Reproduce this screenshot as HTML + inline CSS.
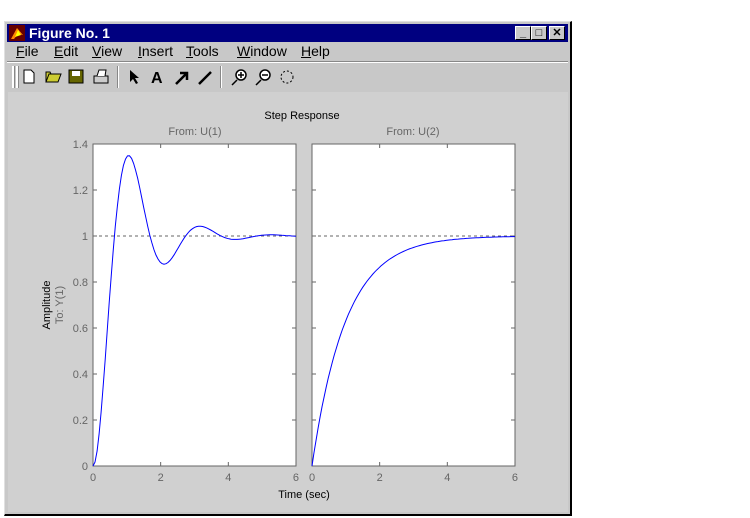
<!DOCTYPE html>
<html><head><style>
body{margin:0;width:750px;height:518px;background:#fff;position:relative;overflow:hidden;font-family:"Liberation Sans",sans-serif}
.win{position:absolute;left:4px;top:21px;width:568px;height:495px;background:#c8c8c8;border-top:1px solid #e0e0e0;border-left:1px solid #e0e0e0;border-right:2px solid #000;border-bottom:2px solid #000;box-sizing:border-box}
.title{position:absolute;left:7px;top:24px;width:561px;height:18px;background:#000080;color:#fff;font-weight:bold;font-size:14px;line-height:18px}
.title span{position:absolute;left:22px;top:0}
.btn{position:absolute;top:2px;width:16px;height:14px;background:#c8c8c8;border-top:1px solid #fff;border-left:1px solid #fff;border-right:1px solid #000;border-bottom:1px solid #000;box-sizing:border-box;color:#000;font-size:11px;line-height:12px;text-align:center}
.menu{position:absolute;top:43px;font-size:14px;color:#000}
.menu u{text-decoration:underline}
.fig{position:absolute;left:8px;top:92px;width:560px;height:420px;background:#d0d0d0}
</style></head><body>
<div class="win"></div>
<div class="title"><svg style="position:absolute;left:2px;top:1px" width="16" height="16"><rect width="16" height="16" fill="#600"/><path d="M2 14 L8 3 L14 10 L9 9 L5 14Z" fill="#f80"/><path d="M6 12 L9 5 L12 10Z" fill="#ff0"/></svg><span>Figure No. 1</span>
<div class="btn" style="left:508px">_</div><div class="btn" style="left:524px">□</div><div class="btn" style="left:542px;font-weight:bold">✕</div></div>
<div class="menu" style="left:16px"><u>F</u>ile</div>
<div class="menu" style="left:54px"><u>E</u>dit</div>
<div class="menu" style="left:92px"><u>V</u>iew</div>
<div class="menu" style="left:138px"><u>I</u>nsert</div>
<div class="menu" style="left:186px"><u>T</u>ools</div>
<div class="menu" style="left:237px"><u>W</u>indow</div>
<div class="menu" style="left:301px"><u>H</u>elp</div>
<div style="position:absolute;left:7px;top:61px;width:561px;height:1px;background:#888"></div>
<div style="position:absolute;left:7px;top:62px;width:561px;height:1px;background:#fff"></div>
<svg style="position:absolute;left:0;top:62px" width="320" height="30">
<rect x="12" y="4" width="2" height="22" fill="#fff"/><rect x="14" y="4" width="1" height="22" fill="#888"/>
<rect x="16" y="4" width="2" height="22" fill="#fff"/><rect x="18" y="4" width="1" height="22" fill="#888"/>
<path d="M24 8h7l3 3v10h-10z" fill="#fff" stroke="#000"/>
<path d="M46 20 l3-8 h12 l-3 8z M46 20 v-10 h4 l1 2" fill="#cc3" stroke="#000"/>
<rect x="69" y="8" width="14" height="13" fill="#660" stroke="#000"/><rect x="72" y="9" width="8" height="5" fill="#fff"/>
<path d="M94 14h14v7h-14z" fill="#ccc" stroke="#000"/><path d="M97 14l2-6h7l-1 6" fill="#fff" stroke="#000"/>
<rect x="117" y="4" width="1" height="22" fill="#888"/><rect x="118" y="4" width="1" height="22" fill="#fff"/>
<path d="M130 8 l0 12 l3-3 l3 5 l2-1 l-3-5 h4z" fill="#000"/>
<text x="151" y="21" font-size="16" font-family="Liberation Sans" font-weight="bold">A</text>
<path d="M176 22 L186 12 M180 11h7v7" stroke="#000" stroke-width="2.5" fill="none"/>
<path d="M199 22 L211 10" stroke="#000" stroke-width="2.5"/>
<rect x="220" y="4" width="1" height="22" fill="#888"/><rect x="221" y="4" width="1" height="22" fill="#fff"/>
<circle cx="241" cy="13" r="5" fill="#fff" stroke="#000" stroke-width="1.5"/><path d="M237 18l-5 5M238 13h6M241 10v6" stroke="#000" stroke-width="1.5"/>
<circle cx="265" cy="13" r="5" fill="#fff" stroke="#000" stroke-width="1.5"/><path d="M261 18l-5 5M262 13h6" stroke="#000" stroke-width="1.5"/>
<circle cx="287" cy="15" r="6" fill="none" stroke="#000" stroke-dasharray="2 2"/>
</svg>
<div class="fig"></div>
<svg id="plot" style="position:absolute;left:0;top:0" width="750" height="518" font-family="Liberation Sans" font-size="11">
<rect x="93" y="144" width="203" height="322" fill="#fff" stroke="#666"/>
<rect x="312" y="144" width="203" height="322" fill="#fff" stroke="#666"/>
<text x="302" y="119" text-anchor="middle" fill="#000">Step Response</text>
<text x="195" y="135" text-anchor="middle" fill="#666">From: U(1)</text>
<text x="413" y="135" text-anchor="middle" fill="#666">From: U(2)</text>
<text x="304" y="498" text-anchor="middle" fill="#000">Time (sec)</text>
<text transform="translate(50,305) rotate(-90)" text-anchor="middle" fill="#000">Amplitude</text>
<text transform="translate(63,305) rotate(-90)" text-anchor="middle" fill="#666">To: Y(1)</text>
<g id="g" fill="#666" stroke="#666"></g>
</svg>
<script>
var g=document.getElementById('g'),s='';
var ys=[0,0.2,0.4,0.6,0.8,1,1.2,1.4],lab=['0','0.2','0.4','0.6','0.8','1','1.2','1.4'];
function Y(v){return 466-v*230}
ys.forEach(function(v,i){var y=Y(v);
s+='<text x="88" y="'+(y+4)+'" text-anchor="end" stroke="none">'+lab[i]+'</text>';
[[93,1],[296,-1],[312,1],[515,-1]].forEach(function(a){s+='<line x1="'+a[0]+'" x2="'+(a[0]+a[1]*4)+'" y1="'+y+'" y2="'+y+'"/>';});});
[0,2,4,6].forEach(function(t){[93,312].forEach(function(x0){var x=x0+t*33.83;
s+='<text x="'+x+'" y="481" text-anchor="middle" stroke="none">'+t+'</text>';
s+='<line x1="'+x+'" x2="'+x+'" y1="466" y2="462"/><line x1="'+x+'" x2="'+x+'" y1="144" y2="148"/>';});});
s+='<line x1="93" x2="296" y1="236" y2="236" stroke-dasharray="3 3"/><line x1="312" x2="515" y1="236" y2="236" stroke-dasharray="3 3"/>';
var z=0.317,wn=3.15,wd=wn*Math.sqrt(1-z*z),p1='',p2='';
for(var t=0;t<=6.001;t+=0.06){var v=1-Math.exp(-z*wn*t)*(Math.cos(wd*t)+z/Math.sqrt(1-z*z)*Math.sin(wd*t));
p1+=(93+t*33.83).toFixed(1)+','+Y(v).toFixed(1)+' ';
var u=1-Math.exp(-t/1.0);p2+=(312+t*33.83).toFixed(1)+','+Y(u).toFixed(1)+' ';}
s+='<polyline points="'+p1+'" fill="none" stroke="#00f"/><polyline points="'+p2+'" fill="none" stroke="#00f"/>';
g.innerHTML=s;
</script>
</body></html>
